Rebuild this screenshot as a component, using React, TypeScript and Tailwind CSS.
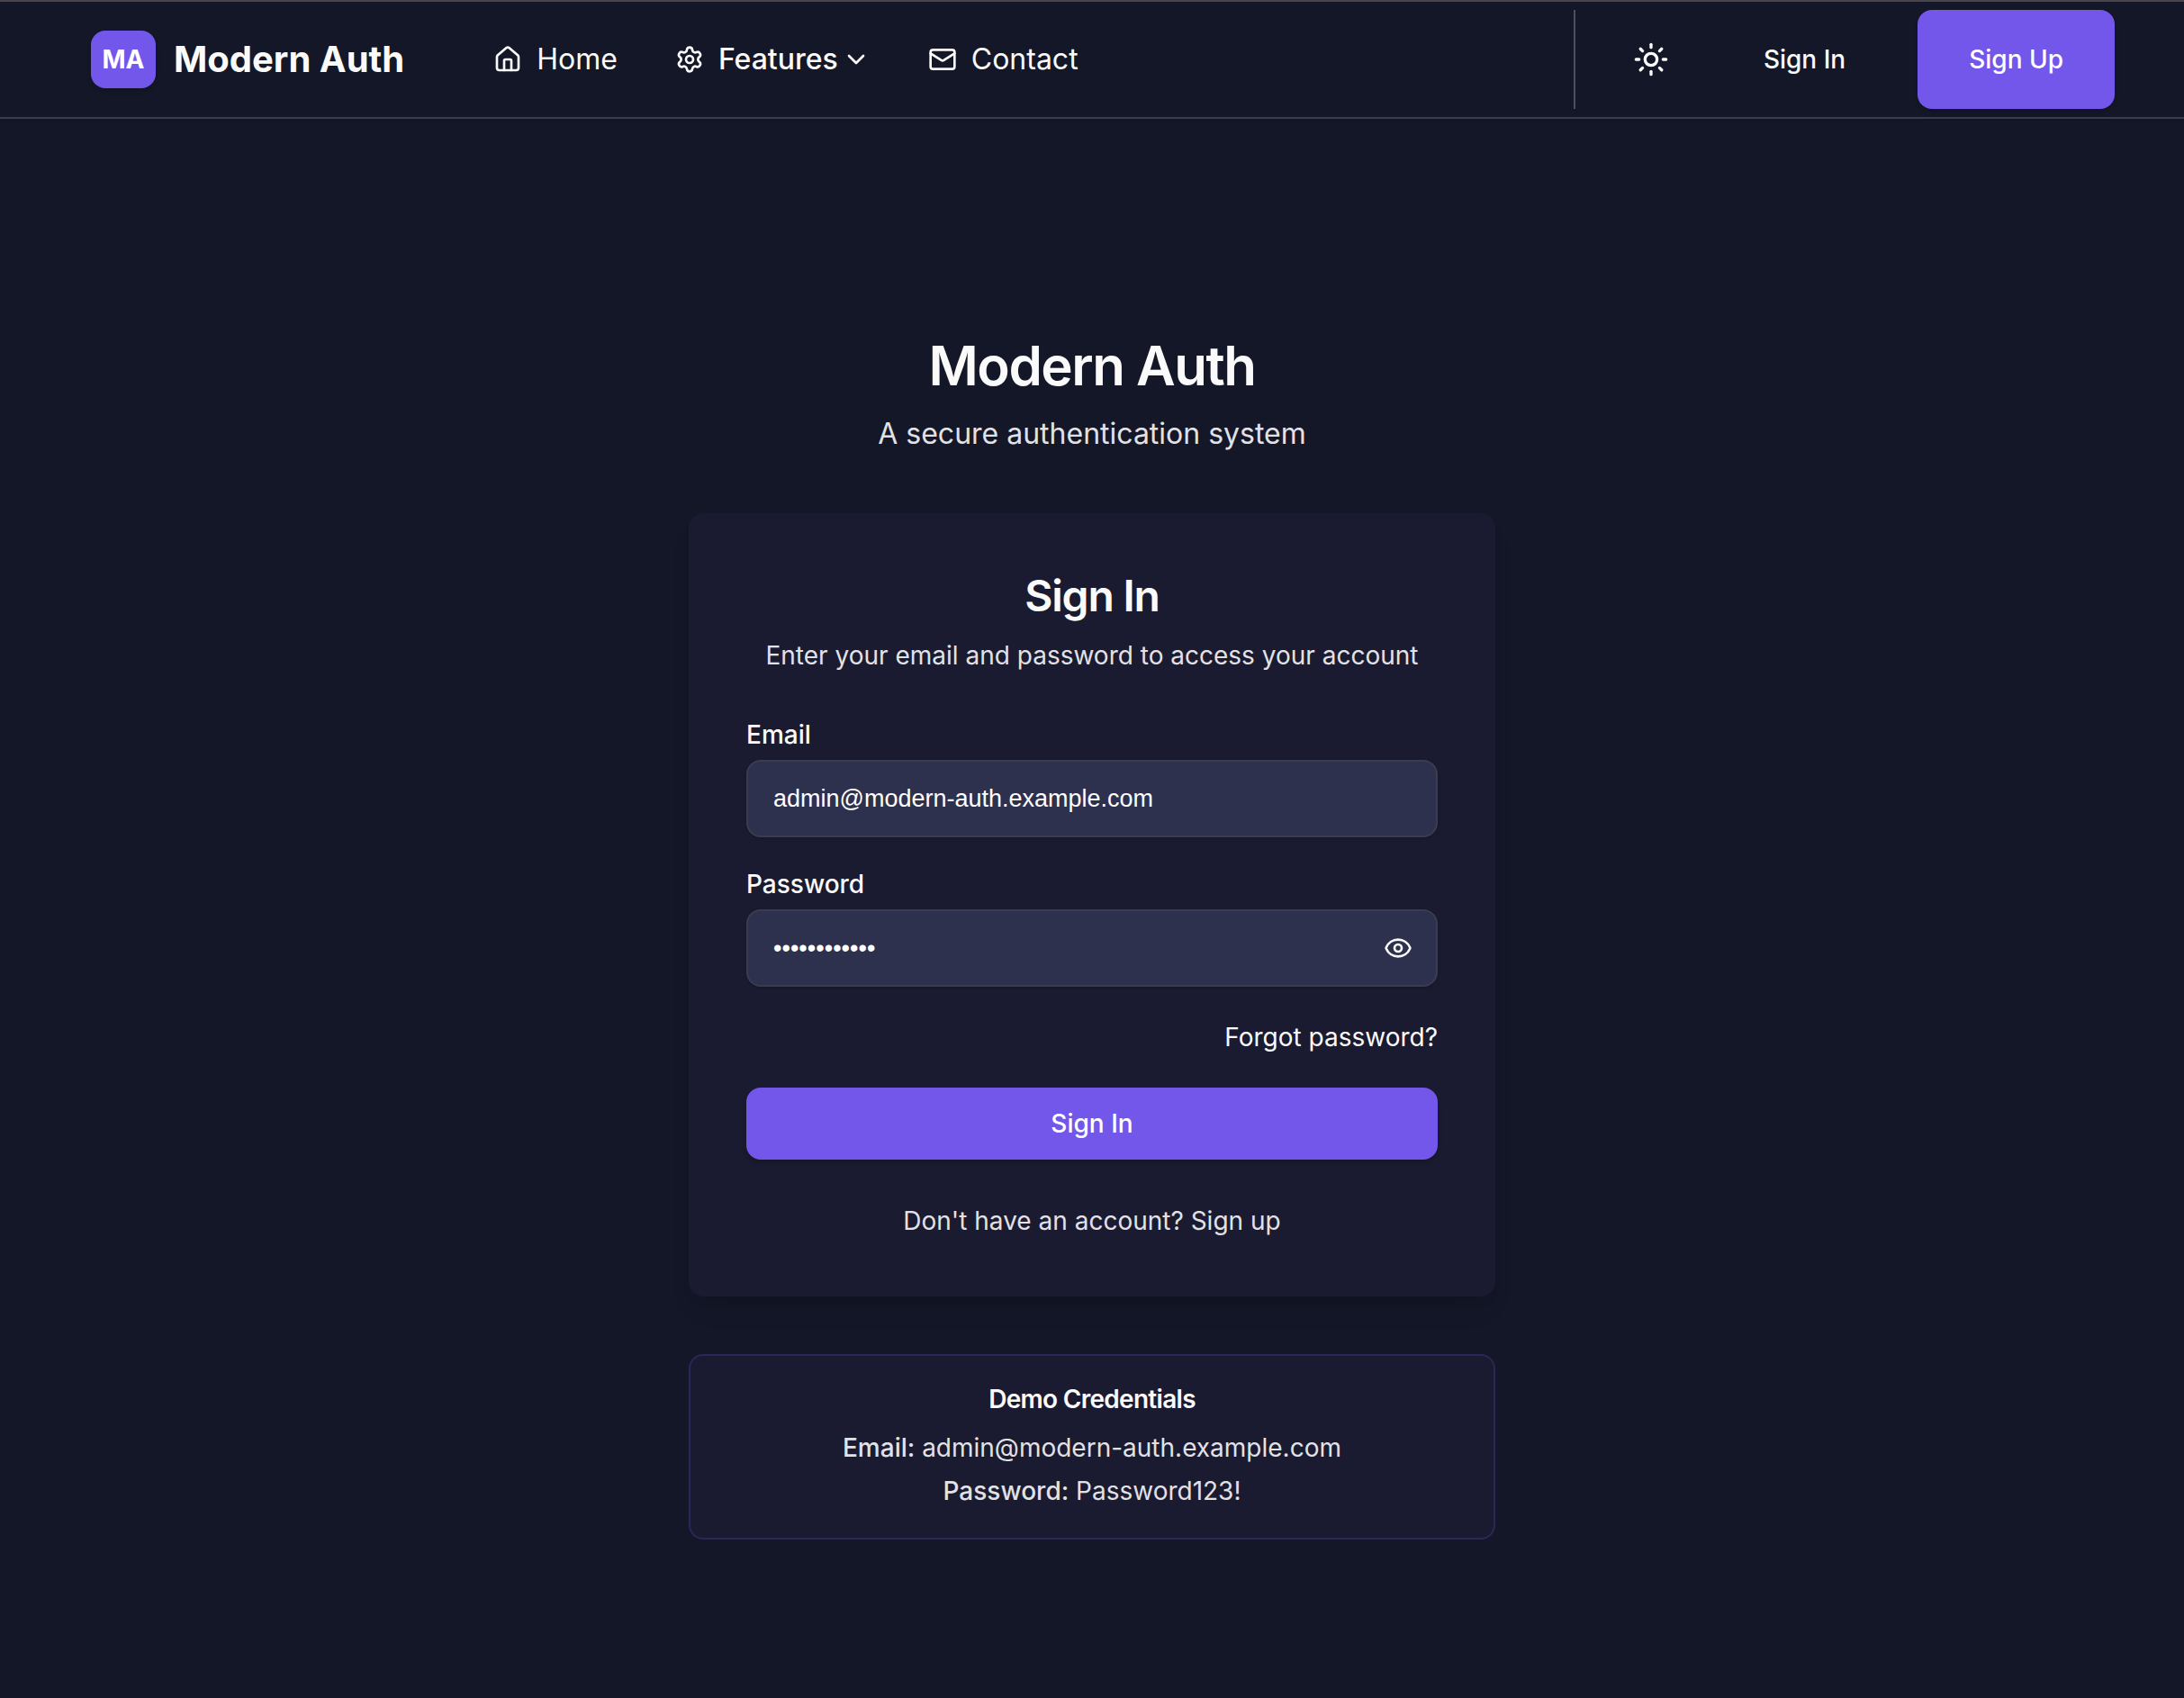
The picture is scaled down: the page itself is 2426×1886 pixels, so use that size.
import React from "react";
import { ChevronDown, Eye, Home, Mail, Settings, Sun } from "lucide-react";

const field =
  "h-[86px] w-full rounded-2xl border-2 border-[#3a3d50] bg-[#2e314e] px-7 font-['Liberation_Sans',sans-serif] text-[27px] text-white shadow-sm outline-none";

export default function App() {
  return (
    <div className="flex min-h-screen flex-col bg-[#141727] font-['Inter',sans-serif] text-[#fafafa] antialiased">
      <header className="flex items-center border-t-2 border-b-2 border-t-[#4b444f] border-b-[#383c54] pr-[77px] pl-[101px] py-[9px] shadow-sm">
        <a href="#" className="flex items-center gap-5">
          <span className="flex h-16 w-[72px] items-center justify-center rounded-2xl bg-[#7357eb] text-[28px] leading-8 font-bold text-white shadow-md">
            MA
          </span>
          <span className="text-[40px] leading-[56px] font-bold">Modern Auth</span>
        </a>
        <nav className="ml-[99px] flex items-center gap-16 text-[32px] leading-[48px]">
          <a href="#" className="flex items-center gap-4">
            <Home size={32} strokeWidth={2} />
            Home
          </a>
          <button type="button" className="flex items-center gap-4 font-medium">
            <Settings size={32} strokeWidth={2} />
            <span className="flex items-center gap-1">
              Features
              <ChevronDown size={32} strokeWidth={2} />
            </span>
          </button>
          <a href="#" className="flex items-center gap-4">
            <Mail size={32} strokeWidth={2} />
            Contact
          </a>
        </nav>
        <div className="ml-auto flex h-[110px] items-center border-l-2 border-[#4d4f5e] text-[28px] font-medium">
          <button type="button" aria-label="Toggle theme" className="ml-16">
            <Sun size={40} strokeWidth={2} />
          </button>
          <button type="button" className="ml-[105px]">Sign In</button>
          <button type="button" className="ml-20 h-full rounded-2xl bg-[#7357eb] px-[57px] text-white shadow-md">
            Sign Up
          </button>
        </div>
      </header>

      <main className="mx-auto flex w-full max-w-[896px] flex-1 flex-col pt-[234px] pb-16">
        <div className="text-center">
          <h1 className="text-[60px] leading-[80px] font-semibold tracking-tight">Modern Auth</h1>
          <p className="mt-3 text-[32px] leading-[48px] text-[#e2e2e6]">A secure authentication system</p>
        </div>

        <section className="mt-16 rounded-2xl bg-[#1a1a30] p-16 shadow-[0_20px_30px_-6px_rgba(0,0,0,0.07),0_8px_12px_-4px_rgba(0,0,0,0.07)]">
          <h2 className="text-center text-[48px] leading-[56px] font-semibold tracking-tight">Sign In</h2>
          <p className="mt-[18px] text-center text-[28px] leading-10 text-[#e2e2e6]">
            Enter your email and password to access your account
          </p>
          <form className="mt-12" onSubmit={(e) => e.preventDefault()}>
            <label htmlFor="email" className="block text-[28px] leading-10 font-medium">Email</label>
            <input id="email" type="email" defaultValue="admin@modern-auth.example.com" className={field + " mt-2"} />
            <label htmlFor="password" className="mt-8 block text-[28px] leading-10 font-medium">Password</label>
            <div className="relative mt-2">
              <input id="password" type="password" defaultValue="Password123!" className={field} />
              <button type="button" aria-label="Show password" className="absolute inset-y-0 right-7">
                <Eye size={32} strokeWidth={2} />
              </button>
            </div>
            <a href="#" className="mt-9 block text-right text-[28px] leading-10">Forgot password?</a>
            <button type="submit" className="mt-9 h-20 w-full rounded-2xl bg-[#7357eb] text-[28px] font-medium text-white shadow-md">
              Sign In
            </button>
          </form>
          <p className="mt-12 text-center text-[28px] leading-10 text-[#e2e2e6]">
            Don't have an account? <a href="#">Sign up</a>
          </p>
        </section>

        <section className="mt-16 rounded-2xl border-2 border-[#2b2758] bg-[#1a1a30] px-8 pt-7 pb-8 text-center text-[28px] leading-10 text-[#e2e2e6]">
          <h3 className="font-semibold tracking-tight text-[#fafafa]">Demo Credentials</h3>
          <p className="mt-[14px]"><strong className="font-medium">Email:</strong> admin@modern-auth.example.com</p>
          <p className="mt-2"><strong className="font-medium">Password:</strong> Password123!</p>
        </section>
      </main>
    </div>
  );
}
